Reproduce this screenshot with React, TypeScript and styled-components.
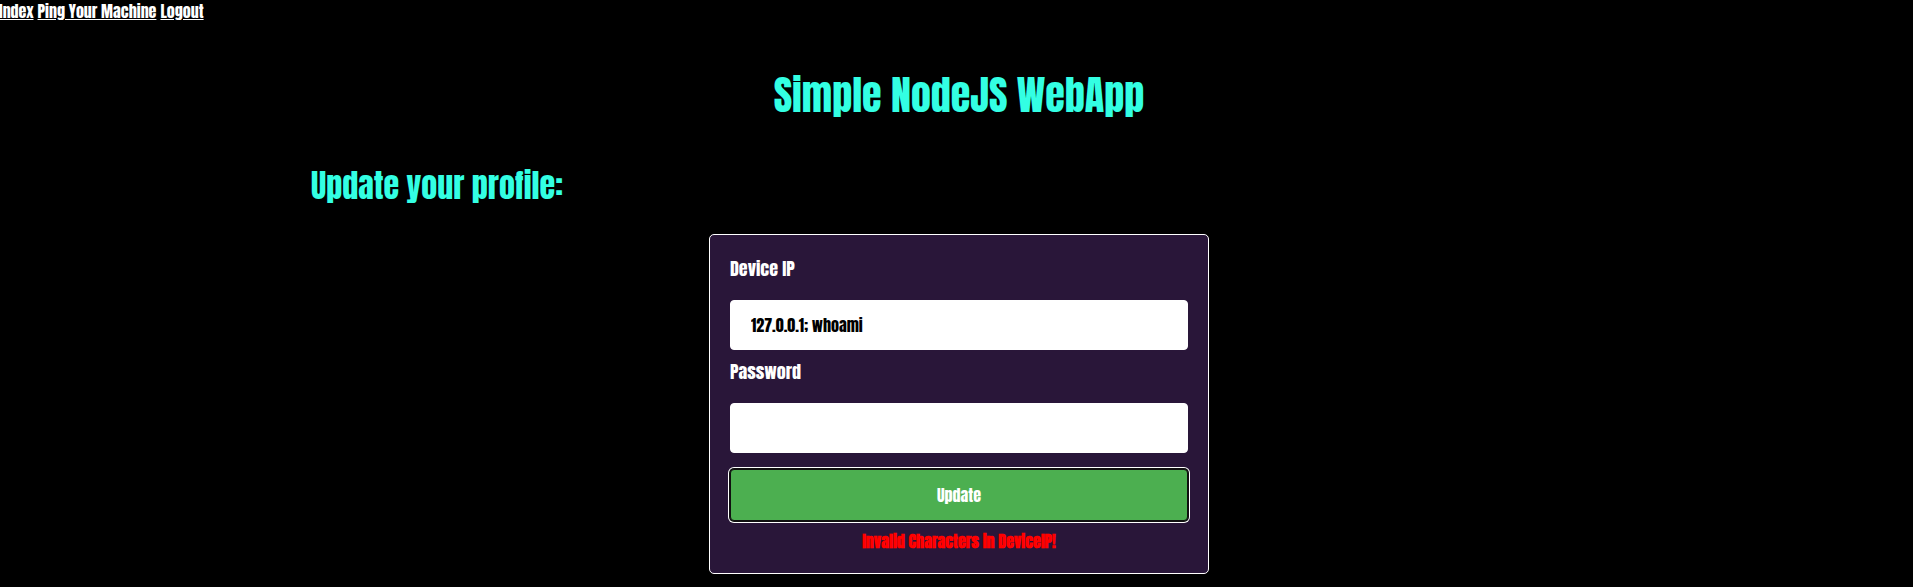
import React from "react";
import styled, { createGlobalStyle } from "styled-components";

const GlobalStyle = createGlobalStyle`
  *, *::before, *::after { box-sizing: border-box; }
  body {
    margin: 0;
    background: #000;
    color: #fff;
    font-family: Anton, "Liberation Sans Narrow", "Liberation Sans", sans-serif;
    font-weight: 400;
    font-size: 16px;
    line-height: 24px;
    overflow-x: hidden;
  }
`;

const Nav = styled.nav`
  display: flex;
  gap: 4px;
  margin-left: -1px;
  line-height: 22px;
`;

const NavLink = styled.a`
  color: #fff;
  text-decoration: underline;
`;

const Main = styled.main`
  width: 68%;
  margin: 0 auto;
  padding-left: 5px;
`;

const Title = styled.h1`
  margin: 35px 0 0;
  color: #33ffe3;
  font-size: 40px;
  font-weight: 400;
  line-height: 76px;
  text-align: center;
`;

const Heading = styled.h2`
  margin: 25px 0 0;
  color: #33ffe3;
  font-size: 32px;
  font-weight: 400;
  line-height: 56px;
`;

const Form = styled.form`
  display: flex;
  flex-direction: column;
  max-width: 500px;
  margin: 20px auto 0;
  padding: 20px;
  background: #291639;
  border: 1px solid #fff;
  border-radius: 5px;
`;

const Label = styled.label`
  margin-bottom: 17px;
  font-size: 18px;
  line-height: 28px;
`;

const Input = styled.input`
  width: 100%;
  height: 50px;
  margin-bottom: 8px;
  padding: 12px 20px;
  border: 1px solid #fff;
  border-radius: 4px;
  background: #fff;
  color: #000;
  font: inherit;
`;

const Button = styled.button`
  height: 52px;
  margin: 8px 0;
  border: 1px solid #101010;
  border-radius: 4px;
  background: #4caf50;
  box-shadow: 0 0 0 1px #101010, 0 0 0 2px #fff;
  color: #fff;
  font: inherit;
`;

const ErrorText = styled.p`
  margin: 0;
  color: #f00;
  font-weight: 700;
  text-align: center;
`;

export default function App() {
  return (
    <>
      <GlobalStyle />
      <Nav>
        <NavLink href="#index">Index</NavLink>
        <NavLink href="#ping">Ping Your Machine</NavLink>
        <NavLink href="#logout">Logout</NavLink>
      </Nav>
      <Main>
        <Title>Simple NodeJS WebApp</Title>
        <Heading>Update your profile:</Heading>
        <Form onSubmit={(e: React.FormEvent) => e.preventDefault()}>
          <Label htmlFor="device-ip">Device IP</Label>
          <Input id="device-ip" type="text" defaultValue="127.0.0.1; whoami" />
          <Label htmlFor="password">Password</Label>
          <Input id="password" type="password" />
          <Button type="submit">Update</Button>
          <ErrorText>Invalid Characters in DeviceIP!</ErrorText>
        </Form>
      </Main>
    </>
  );
}
